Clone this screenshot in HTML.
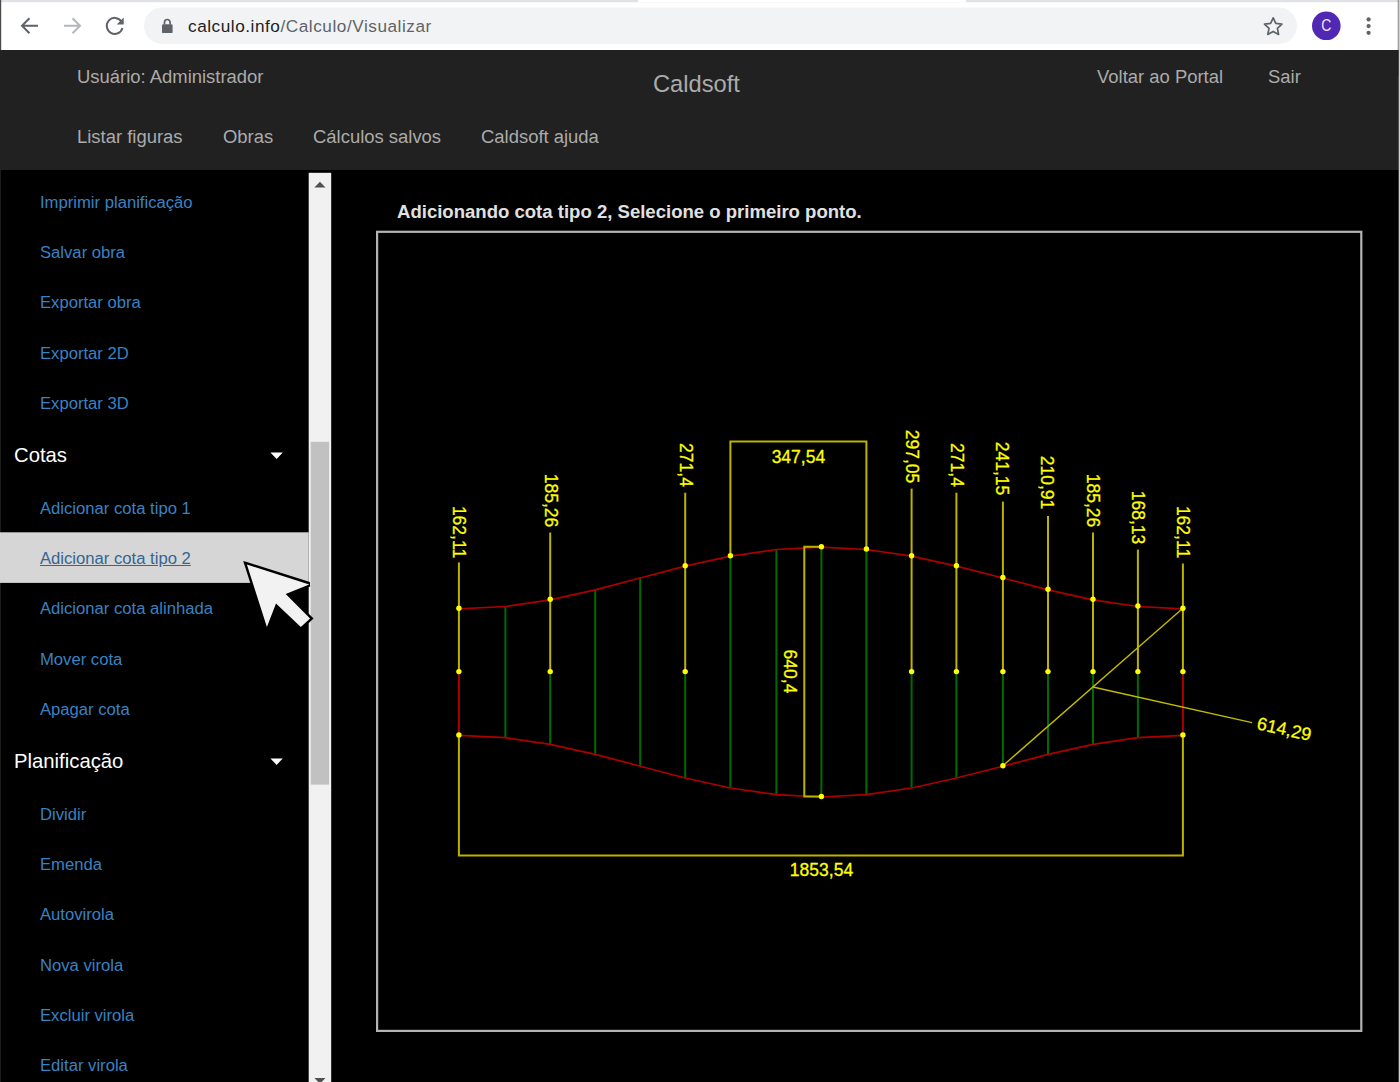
<!DOCTYPE html>
<html lang="pt-BR"><head><meta charset="utf-8"><title>Caldsoft</title>
<style>
html,body{margin:0;padding:0;background:#000;}
body{width:1400px;height:1082px;position:relative;overflow:hidden;font-family:"Liberation Sans",Arial,sans-serif;}
.abs{position:absolute;}
#chrome{position:absolute;left:0;top:0;width:1400px;height:50px;background:#fff;}
#url{position:absolute;left:188px;top:15px;font-size:17.2px;line-height:22px;color:#5f6368;white-space:pre;letter-spacing:.54px;}
#url b{font-weight:normal;color:#202124;}
#hdr{position:absolute;left:0;top:50px;width:1400px;height:120px;background:#212121;}
.nv{position:absolute;color:#ababab;font-size:18.45px;line-height:22px;white-space:pre;}
#brand{position:absolute;left:653px;top:70px;color:#ababab;font-size:23.7px;line-height:28px;white-space:pre;}
.lk{position:absolute;left:40px;color:#3982c3;font-size:16.65px;line-height:24px;white-space:pre;text-decoration:none;}
.lk.sel{color:#356592;text-decoration:underline;}
.sec{position:absolute;left:14px;color:#fff;font-size:20.3px;line-height:30px;white-space:pre;}
#msg{position:absolute;left:397px;top:201px;color:#e0e0e0;font-weight:bold;font-size:18.56px;line-height:22px;white-space:pre;}
svg text.ct{font-family:"Liberation Sans",Arial,sans-serif;font-size:17.5px;fill:#ffff00;stroke:#ffff00;stroke-width:.3px;}
</style></head><body>
<div id="chrome"></div>
<div id="hdr"></div>
<svg class="abs" style="left:0;top:0" width="1400" height="1082" viewBox="0 0 1400 1082">
<!-- browser chrome -->
<rect x="0" y="0" width="1400" height="2.2" fill="#dee1e6"/>
<rect x="638" y="0" width="328" height="2.2" fill="#fff"/>
<rect x="144" y="7.4" width="1153" height="36.6" rx="18.3" fill="#f1f3f4"/>
<g fill="none" stroke="#5f6368" stroke-width="2">
<path d="M38 25.8H22M29.5 18.3l-7.5 7.5 7.5 7.5"/>
<path d="M64 25.8H80M72.500 18.3l7.500 7.500-7.500 7.500" stroke="#b4b7bb"/>
<path d="M121.500 21.500A8 8 0 1 0 122.500 28"/>
</g>
<path d="M123.700 17.600v7h-7z" fill="#5f6368"/>
<rect x="162" y="24.3" width="10.6" height="8.8" rx="1.2" fill="#5f6368"/>
<path d="M164.500 24.500v-2.200a2.800 2.800 0 0 1 5.600 0v2.200" fill="none" stroke="#5f6368" stroke-width="1.7"/>
<path d="M1273.200 17.800l2.600 5.600 6.100.7-4.500 4.200 1.200 6.100-5.400-3-5.400 3 1.200-6.100-4.500-4.200 6.100-.7z" fill="none" stroke="#5f6368" stroke-width="1.7" stroke-linejoin="round"/>
<circle cx="1326.300" cy="25.800" r="14.300" fill="#5128b4"/>
<circle cx="1368.600" cy="19.400" r="2.100" fill="#5f6368"/><circle cx="1368.600" cy="26.100" r="2.100" fill="#5f6368"/><circle cx="1368.600" cy="32.800" r="2.100" fill="#5f6368"/>
<text transform="translate(1326.300,31.400) scale(.92,1.05)" text-anchor="middle" font-family="Liberation Sans, Arial, sans-serif" font-size="15.200" fill="#f0eaff">C</text>
<rect x="0" y="0" width="1.200" height="50" fill="#4a4a4a"/>
<rect x="0" y="170" width="1" height="912" fill="#1c1c1c"/>
<rect x="1397.800" y="0" width="0.900" height="50" fill="#5a5a5a"/>
<rect x="1397.800" y="50" width="0.900" height="26" fill="#0c0c0c"/>
<rect x="1398.700" y="0" width="1.300" height="1082" fill="#d2d2d2"/>
<!-- sidebar highlight + scrollbar -->
<rect x="0" y="532.300" width="308.700" height="50.600" fill="#d6d6d6"/>
<rect x="308.700" y="172.800" width="22.500" height="910" fill="#f1f1f1"/>
<rect x="310.700" y="441.800" width="18.400" height="342.800" fill="#c1c1c1"/>
<path d="M314.400 187.500l5.550-5.800 5.550 5.800z" fill="#505050"/>
<path d="M314.400 1077.900l5.550 5.800 5.550-5.800z" fill="#505050"/>
<path d="M270.400 452.400h12.400l-6.200 6.500z" fill="#fff"/>
<path d="M270.400 758.400h12.400l-6.200 6.500z" fill="#fff"/>
<!-- canvas frame -->
<rect x="377.100" y="231.800" width="984.200" height="799.100" fill="none" stroke="#b4b4b4" stroke-width="2.200"/>
</svg>
<div id="url"><b>calculo.info</b>/Calculo/Visualizar</div>
<div class="nv" style="left:77px;top:66px">Usuário: Administrador</div>
<div id="brand">Caldsoft</div>
<div class="nv" style="left:1097px;top:66px">Voltar ao Portal</div>
<div class="nv" style="left:1268px;top:66px">Sair</div>
<div class="nv" style="left:77px;top:126px">Listar figuras</div>
<div class="nv" style="left:223px;top:126px">Obras</div>
<div class="nv" style="left:313px;top:126px">Cálculos salvos</div>
<div class="nv" style="left:481px;top:126px">Caldsoft ajuda</div>
<a class="lk" style="top:191px">Imprimir planificação</a>
<a class="lk" style="top:241px">Salvar obra</a>
<a class="lk" style="top:291px">Exportar obra</a>
<a class="lk" style="top:342px">Exportar 2D</a>
<a class="lk" style="top:392px">Exportar 3D</a>
<div class="sec" style="top:440px">Cotas</div>
<a class="lk" style="top:497px">Adicionar cota tipo 1</a>
<a class="lk sel" style="top:547px">Adicionar cota tipo 2</a>
<a class="lk" style="top:597px">Adicionar cota alinhada</a>
<a class="lk" style="top:648px">Mover cota</a>
<a class="lk" style="top:698px">Apagar cota</a>
<div class="sec" style="top:746px">Planificação</div>
<a class="lk" style="top:803px">Dividir</a>
<a class="lk" style="top:853px">Emenda</a>
<a class="lk" style="top:903px">Autovirola</a>
<a class="lk" style="top:954px">Nova virola</a>
<a class="lk" style="top:1004px">Excluir virola</a>
<a class="lk" style="top:1054px">Editar virola</a>
<div id="msg">Adicionando cota tipo 2, Selecione o primeiro ponto.</div>
<svg class="abs" style="left:0;top:0" width="1400" height="1082" viewBox="0 0 1400 1082">
<line x1="505.4" y1="606" x2="505.4" y2="737.2" stroke="#006c00" stroke-width="2"/>
<line x1="550.2" y1="671.6" x2="550.2" y2="743.9" stroke="#006c00" stroke-width="2"/>
<line x1="595.2" y1="589.3" x2="595.2" y2="753.9" stroke="#006c00" stroke-width="2"/>
<line x1="640.2" y1="577.5" x2="640.2" y2="765.7" stroke="#006c00" stroke-width="2"/>
<line x1="685.2" y1="671.6" x2="685.2" y2="777.5" stroke="#006c00" stroke-width="2"/>
<line x1="730.4" y1="555.7" x2="730.4" y2="787.5" stroke="#006c00" stroke-width="2"/>
<line x1="776.4" y1="549" x2="776.4" y2="794.2" stroke="#006c00" stroke-width="2"/>
<line x1="821.4" y1="546.7" x2="821.4" y2="796.5" stroke="#006c00" stroke-width="2"/>
<line x1="866.4" y1="549" x2="866.4" y2="794.2" stroke="#006c00" stroke-width="2"/>
<line x1="911.6" y1="671.6" x2="911.6" y2="787.5" stroke="#006c00" stroke-width="2"/>
<line x1="956.4" y1="671.6" x2="956.4" y2="777.5" stroke="#006c00" stroke-width="2"/>
<line x1="1002.9" y1="671.6" x2="1002.9" y2="765.7" stroke="#006c00" stroke-width="2"/>
<line x1="1048" y1="671.6" x2="1048" y2="753.9" stroke="#006c00" stroke-width="2"/>
<line x1="1093" y1="671.6" x2="1093" y2="743.9" stroke="#006c00" stroke-width="2"/>
<line x1="1137.9" y1="671.6" x2="1137.9" y2="737.2" stroke="#006c00" stroke-width="2"/>
<line x1="458.9" y1="671.6" x2="458.9" y2="734.9" stroke="#ac0000" stroke-width="2"/>
<line x1="1182.9" y1="671.6" x2="1182.9" y2="734.9" stroke="#ac0000" stroke-width="2"/>
<polyline fill="none" stroke="#ac0000" stroke-width="1.7" points="458.9,608.8 505.4,606.5 550.2,599.8 595.2,589.8 640.2,578 685.2,566.2 730.4,556.2 776.4,549.5 821.4,547.2 866.4,549.5 911.6,556.2 956.4,566.2 1002.9,578 1048,589.8 1093,599.8 1137.9,606.5 1182.9,608.8"/>
<polyline fill="none" stroke="#ac0000" stroke-width="1.7" points="458.9,735.4 505.4,737.7 550.2,744.4 595.2,754.4 640.2,766.2 685.2,778 730.4,788 776.4,794.7 821.4,797 866.4,794.7 911.6,788 956.4,778 1002.9,766.2 1048,754.4 1093,744.4 1137.9,737.7 1182.9,735.4"/>
<line x1="458.9" y1="562.4" x2="458.9" y2="671.6" stroke="#bcb200" stroke-width="2"/>
<text transform="translate(453.4,532) rotate(90)" text-anchor="middle" class="ct">162,11</text>
<line x1="550.2" y1="532.5" x2="550.2" y2="671.6" stroke="#bcb200" stroke-width="2"/>
<text transform="translate(544.7,500.5) rotate(90)" text-anchor="middle" class="ct">185,26</text>
<line x1="685.2" y1="492.7" x2="685.2" y2="671.6" stroke="#bcb200" stroke-width="2"/>
<text transform="translate(679.7,465) rotate(90)" text-anchor="middle" class="ct">271,4</text>
<line x1="911.6" y1="488.6" x2="911.6" y2="671.6" stroke="#bcb200" stroke-width="2"/>
<text transform="translate(906.1,456.5) rotate(90)" text-anchor="middle" class="ct">297,05</text>
<line x1="956.4" y1="492.7" x2="956.4" y2="671.6" stroke="#bcb200" stroke-width="2"/>
<text transform="translate(950.9,465) rotate(90)" text-anchor="middle" class="ct">271,4</text>
<line x1="1002.9" y1="501.6" x2="1002.9" y2="671.6" stroke="#bcb200" stroke-width="2"/>
<text transform="translate(996.4,468.5) rotate(90)" text-anchor="middle" class="ct">241,15</text>
<line x1="1048" y1="516" x2="1048" y2="671.6" stroke="#bcb200" stroke-width="2"/>
<text transform="translate(1040.5,482.5) rotate(90)" text-anchor="middle" class="ct">210,91</text>
<line x1="1093" y1="532.4" x2="1093" y2="671.6" stroke="#bcb200" stroke-width="2"/>
<text transform="translate(1086.5,500.5) rotate(90)" text-anchor="middle" class="ct">185,26</text>
<line x1="1137.9" y1="549.6" x2="1137.9" y2="671.6" stroke="#bcb200" stroke-width="2"/>
<text transform="translate(1132.4,517.5) rotate(90)" text-anchor="middle" class="ct">168,13</text>
<line x1="1182.9" y1="563.5" x2="1182.9" y2="671.6" stroke="#bcb200" stroke-width="2"/>
<text transform="translate(1177.4,532) rotate(90)" text-anchor="middle" class="ct">162,11</text>
<polyline fill="none" stroke="#bcb200" stroke-width="2" points="730.4,555.7 730.4,441.6 866.4,441.6 866.4,549"/>
<text x="798.4" y="463" text-anchor="middle" class="ct">347,54</text>
<polyline fill="none" stroke="#bcb200" stroke-width="2" points="821.4,546.7 804.3,546.7 804.3,796.5 821.4,796.5"/>
<text transform="translate(783.5,671.5) rotate(90)" text-anchor="middle" class="ct">640,4</text>
<polyline fill="none" stroke="#bcb200" stroke-width="2" points="458.9,734.9 458.9,855.4 1182.9,855.4 1182.9,734.9"/>
<text x="821.5" y="876" text-anchor="middle" class="ct">1853,54</text>
<line x1="1002.9" y1="765.7" x2="1182.9" y2="608.3" stroke="#c4ba00" stroke-width="1.35"/>
<line x1="1092.9" y1="687" x2="1252" y2="722.7" stroke="#c4ba00" stroke-width="1.35"/>
<text transform="translate(1256,729) rotate(12.6)" class="ct" style="font-size:18px">614,29</text>
<circle cx="458.9" cy="608.3" r="2.7" fill="#ffff00"/>
<circle cx="458.9" cy="671.6" r="2.7" fill="#ffff00"/>
<circle cx="550.2" cy="599.3" r="2.7" fill="#ffff00"/>
<circle cx="550.2" cy="671.6" r="2.7" fill="#ffff00"/>
<circle cx="685.2" cy="565.7" r="2.7" fill="#ffff00"/>
<circle cx="685.2" cy="671.6" r="2.7" fill="#ffff00"/>
<circle cx="911.6" cy="555.7" r="2.7" fill="#ffff00"/>
<circle cx="911.6" cy="671.6" r="2.7" fill="#ffff00"/>
<circle cx="956.4" cy="565.7" r="2.7" fill="#ffff00"/>
<circle cx="956.4" cy="671.6" r="2.7" fill="#ffff00"/>
<circle cx="1002.9" cy="577.5" r="2.7" fill="#ffff00"/>
<circle cx="1002.9" cy="671.6" r="2.7" fill="#ffff00"/>
<circle cx="1048" cy="589.3" r="2.7" fill="#ffff00"/>
<circle cx="1048" cy="671.6" r="2.7" fill="#ffff00"/>
<circle cx="1093" cy="599.3" r="2.7" fill="#ffff00"/>
<circle cx="1093" cy="671.6" r="2.7" fill="#ffff00"/>
<circle cx="1137.9" cy="606" r="2.7" fill="#ffff00"/>
<circle cx="1137.9" cy="671.6" r="2.7" fill="#ffff00"/>
<circle cx="1182.9" cy="608.3" r="2.7" fill="#ffff00"/>
<circle cx="1182.9" cy="671.6" r="2.7" fill="#ffff00"/>
<circle cx="730.4" cy="555.7" r="2.7" fill="#ffff00"/>
<circle cx="866.4" cy="549" r="2.7" fill="#ffff00"/>
<circle cx="821.4" cy="546.7" r="2.7" fill="#ffff00"/>
<circle cx="821.4" cy="796.5" r="2.7" fill="#ffff00"/>
<circle cx="458.9" cy="734.9" r="2.7" fill="#ffff00"/>
<circle cx="1182.9" cy="734.9" r="2.7" fill="#ffff00"/>
<circle cx="1002.9" cy="765.7" r="2.7" fill="#ffff00"/>
<path d="M246.900 564.600 L309.200 584.400 L285.700 594.100 L310.100 618.400 L300.800 627.100 L276 603.400 L266.900 626.900 Z" fill="#000" stroke="#000" stroke-width="4.800" stroke-linejoin="miter" stroke-miterlimit="2.500"/>
<path d="M246.900 564.600 L309.200 584.400 L285.700 594.100 L310.100 618.400 L300.800 627.100 L276 603.400 L266.900 626.900 Z" fill="#f2f2f2"/>
</svg>
</body></html>
